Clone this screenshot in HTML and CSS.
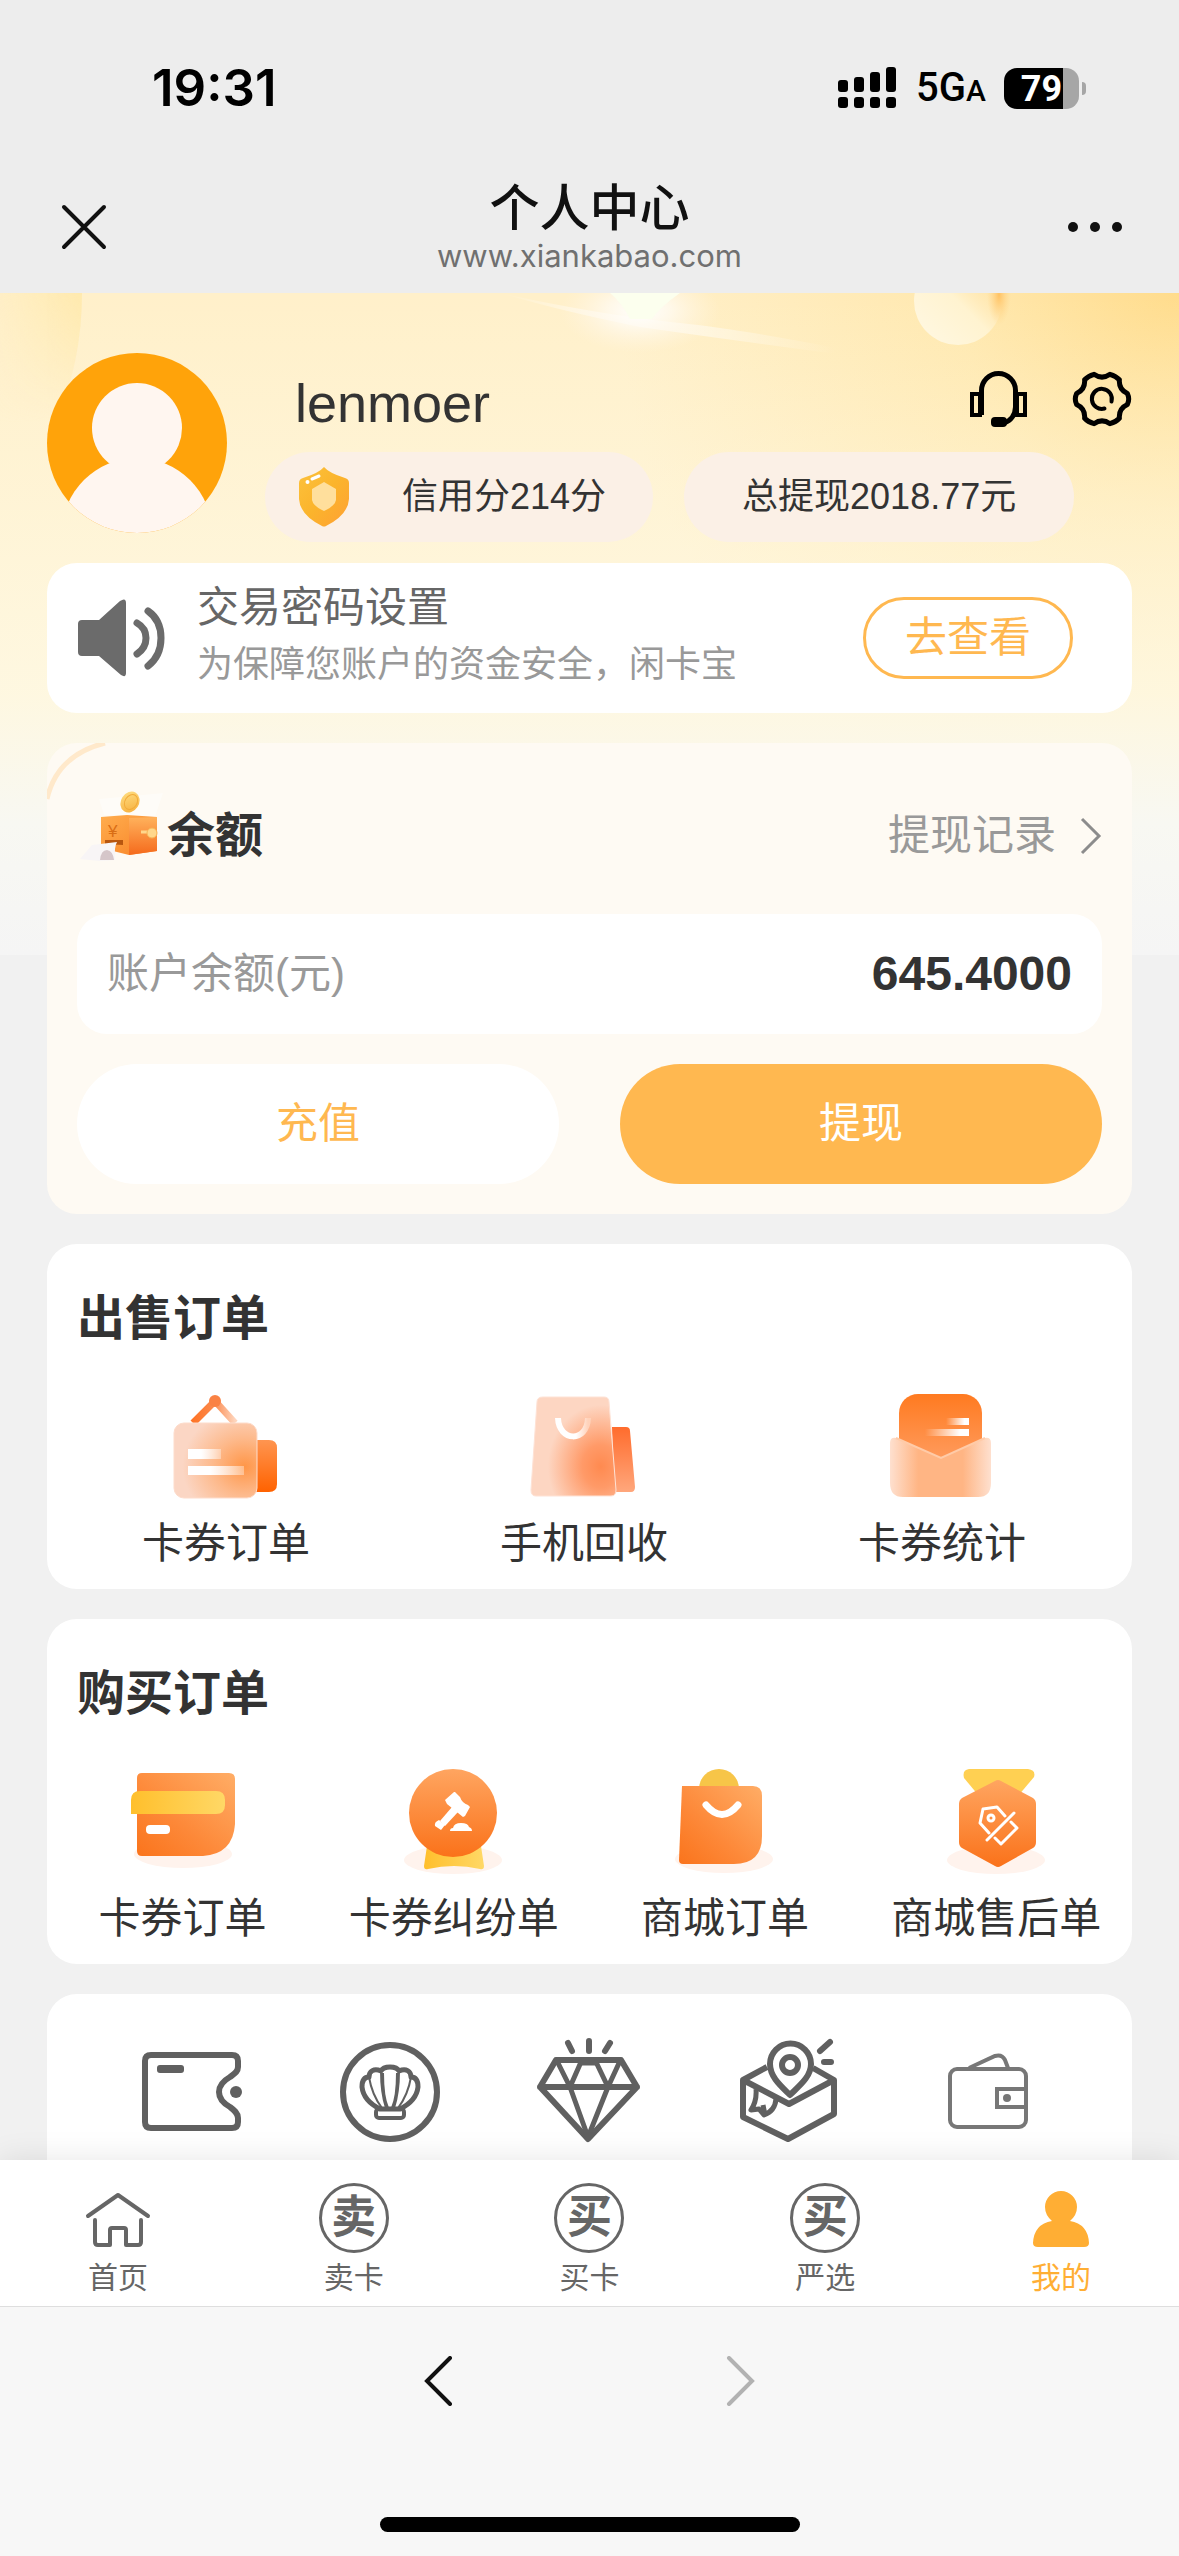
FILE: index.html
```html
<!DOCTYPE html>
<html lang="zh-CN">
<head>
<meta charset="utf-8">
<meta name="viewport" content="width=device-width, initial-scale=1">
<title>个人中心</title>
<link rel="stylesheet" href="styles.css">
</head>
<body>
<div class="app">
  <header class="chrome">
    <div class="status">
      <span class="status-time">19:31</span>
      <div class="status-right">
        <svg class="signal" viewBox="0 0 58 42" aria-hidden="true">
          <rect x="0" y="13" width="10" height="12" rx="3"/><rect x="16" y="10" width="10" height="15" rx="3"/><rect x="32" y="5" width="10" height="20" rx="3"/><rect x="48" y="0" width="10" height="25" rx="3"/>
          <rect x="0" y="30" width="10" height="11" rx="3"/><rect x="16" y="30" width="10" height="11" rx="3"/><rect x="32" y="30" width="10" height="11" rx="3"/><rect x="48" y="30" width="10" height="11" rx="3"/>
        </svg>
        <span class="network">5G<span class="network-sub">A</span></span>
        <span class="battery">79</span>
      </div>
    </div>
    <div class="navbar">
      <button class="nav-btn" type="button" aria-label="关闭">
        <svg width="54" height="54" viewBox="0 0 54 54" fill="none" stroke="#111" stroke-width="4" stroke-linecap="round"><path d="M7 7L47 47M47 7L7 47"/></svg>
      </button>
      <div class="nav-title">
        <h1>个人中心</h1>
        <p>www.xiankabao.com</p>
      </div>
      <button class="nav-btn nav-more" type="button" aria-label="更多">
        <svg width="54" height="54" viewBox="0 0 54 54" fill="#111"><circle cx="5" cy="27" r="5"/><circle cx="27" cy="27" r="5"/><circle cx="49" cy="27" r="5"/></svg>
      </button>
    </div>
  </header>

  <main class="content">
    <svg class="glow" viewBox="0 0 1179 662" preserveAspectRatio="none" aria-hidden="true">
      <defs>
        <linearGradient id="edge" x1="0" y1="0" x2="1" y2="0"><stop offset="0" stop-color="#ffe9a8" stop-opacity=".1"/><stop offset="1" stop-color="#ffe7a4" stop-opacity=".75"/></linearGradient>
        <linearGradient id="edgefade" x1="0" y1="0" x2="0" y2="1"><stop offset="0" stop-color="#fff"/><stop offset="1" stop-color="#000"/></linearGradient>
        <mask id="em"><rect x="0" y="0" width="90" height="130" fill="url(#edgefade)"/></mask>
        <radialGradient id="flare"><stop offset="0" stop-color="#fff"/><stop offset=".4" stop-color="#fffaf0" stop-opacity=".8"/><stop offset="1" stop-color="#fff4e0" stop-opacity="0"/></radialGradient>
        <linearGradient id="ball" x1="0" y1="1" x2="1" y2="0"><stop offset="0" stop-color="#fff8e4"/><stop offset=".5" stop-color="#fff3d0"/><stop offset=".85" stop-color="#ffe3a8" stop-opacity="0"/></linearGradient>
        <radialGradient id="spot"><stop offset="0" stop-color="#ffc262"/><stop offset="1" stop-color="#ffd68a" stop-opacity="0"/></radialGradient>
        <linearGradient id="ray" x1="0" y1="0" x2="1" y2="0"><stop offset="0" stop-color="#fff" stop-opacity="0"/><stop offset=".3" stop-color="#fff" stop-opacity=".7"/><stop offset=".8" stop-color="#fff" stop-opacity="0"/></linearGradient>
      </defs>
      <path d="M0 0H82Q82 70 55 130H0Z" fill="url(#edge)" mask="url(#em)"/>
      <path d="M500 0Q600 22 680 30T920 72Q780 54 640 34Q560 18 500 0Z" fill="url(#ray)"/>
      <ellipse cx="640" cy="18" rx="80" ry="42" fill="url(#flare)"/>
      <path d="M610 0H680Q660 14 652 26H630Q622 10 610 0Z" fill="#fcffee"/>
      <circle cx="958" cy="8" r="44" fill="url(#ball)"/>
      <ellipse cx="999" cy="2" rx="12" ry="30" fill="url(#spot)"/>
    </svg>

    <section class="profile">
      <svg class="avatar" viewBox="0 0 180 180" role="img" aria-label="头像">
        <clipPath id="av"><circle cx="90" cy="90" r="90"/></clipPath>
        <circle cx="90" cy="90" r="90" fill="#ffa30a"/>
        <g clip-path="url(#av)" fill="#fff6f0"><circle cx="90" cy="75" r="45"/><circle cx="90" cy="180" r="75"/></g>
      </svg>
      <div class="profile-info">
        <div class="profile-top">
          <span class="username">lenmoer</span>
          <div class="tools">
            <button class="tool" type="button" aria-label="客服">
              <svg width="60" height="60" viewBox="0 0 60 60" fill="none" stroke="#000" stroke-width="5"><path d="M12.500 46V21.500a17 17 0 0 1 34 0V38Q46 50 35 54"/><path stroke-width="4" d="M3 25h8v21H3zM48 25h8v21h-8z"/><rect x="22" y="48" width="16" height="10" rx="4" fill="#000" stroke="none"/></svg>
            </button>
            <button class="tool" type="button" aria-label="设置">
              <svg width="60" height="60" viewBox="0 0 60 60" fill="none" stroke="#000" stroke-width="5" stroke-linejoin="round"><path d="M55.400 24.600Q58 30 55.400 35.400Q46.500 39.500 47.400 49.300Q44 53 38 54.700Q30 49 22 54.700Q16 53 12.600 49.300Q13.500 39.500 4.600 35.400Q2 30 4.600 24.600Q13.500 20.500 12.600 10.700Q16 7 22 5.300Q30 11 38 5.300Q44 7 47.400 10.700Q46.500 20.500 55.400 24.600Z"/><path stroke-width="4" stroke-linecap="round" d="M39.500 32.500a10 10 0 1 0-7 7"/></svg>
            </button>
          </div>
        </div>
        <div class="pills">
          <span class="pill pill-credit">
            <svg width="50" height="60" viewBox="0 0 50 60" aria-hidden="true">
              <defs><linearGradient id="sh" x1="0" y1="0" x2="1" y2="1"><stop offset="0" stop-color="#fcc23c"/><stop offset=".5" stop-color="#fbb42c"/><stop offset="1" stop-color="#ffa033"/></linearGradient></defs>
              <path d="M25 0Q30 6 46 11Q50 12 50 16V32Q49 48 27 59Q25 60 23 59Q1 48 0 32V16Q0 12 4 11Q20 6 25 0Z" fill="url(#sh)"/>
              <path d="M25 15L37 22V33Q36 39 25 44Q14 39 13 33V22Z" fill="#ffdf9c"/>
              <path d="M13 12L20 9" stroke="#fff" stroke-width="3" stroke-linecap="round"/><circle cx="8.500" cy="15" r="2" fill="#fff"/>
            </svg>
            信用分214分
          </span>
          <span class="pill">总提现2018.77元</span>
        </div>
      </div>
    </section>

    <section class="card notice">
      <svg width="90" height="80" viewBox="0 0 90 80" aria-hidden="true">
        <path d="M5 22H22L43 3Q49 -1 49 5V75Q49 80 44 77L22 58H5Q1 58 1 54V26Q1 22 5 22Z" fill="#6b6b6b"/>
        <path d="M60 25Q69 30 69 40T60 56M71 13Q84 22 84 40T71 68" fill="none" stroke="#6b6b6b" stroke-width="7" stroke-linecap="round"/>
      </svg>
      <div class="notice-text">
        <h2>交易密码设置</h2>
        <p>为保障您账户的资金安全，闲卡宝</p>
      </div>
      <button class="btn-outline" type="button">去查看</button>
    </section>

    <section class="card balance">
      <svg class="balance-arc" width="80" height="60" viewBox="0 0 80 60" aria-hidden="true"><path d="M0 56Q10 12 58 0" fill="none" stroke="#ffe9cb" stroke-width="5"/></svg>
      <div class="balance-head">
        <svg width="90" height="90" viewBox="0 0 90 90" aria-hidden="true">
          <defs>
            <linearGradient id="bf" x1="0" y1="0" x2="1" y2="1"><stop offset="0" stop-color="#ffad4e"/><stop offset="1" stop-color="#f88327"/></linearGradient>
            <linearGradient id="bs" x1="0" y1="0" x2="0" y2="1"><stop offset="0" stop-color="#ffb25c"/><stop offset="1" stop-color="#f56a1c"/></linearGradient>
            <linearGradient id="cn" x1="0" y1="0" x2="1" y2="1"><stop offset="0" stop-color="#ffe187"/><stop offset="1" stop-color="#f6ac38"/></linearGradient>
          </defs>
          <path d="M27 24L22 8L86 2L78 26Z" fill="#fff" opacity=".4"/>
          <path d="M24 26L50 24L80 26V60L52 64L24 57Z" fill="url(#bf)"/>
          <path d="M52 27L80 26V60L52 64Z" fill="url(#bs)"/>
          <ellipse cx="53" cy="11" rx="9" ry="11" transform="rotate(32 53 11)" fill="url(#cn)"/>
          <ellipse cx="54" cy="11" rx="6" ry="8" transform="rotate(32 54 11)" fill="none" stroke="#f2ab3a" stroke-width="1"/>
          <text x="31" y="46" font-size="17" fill="#d96d15">¥</text>
          <path d="M28 49H46V54L28 53Z" fill="#b8560f"/>
          <path d="M15 54L40 51Q37 56 38 69L22 70L3 68Z" fill="#f8f5f6"/><path d="M23 69Q24 59 30 59Q36 60 37 69Z" fill="#d5c6c9"/>
          <path d="M64 41H72" stroke="#ffd78b" stroke-width="3"/><circle cx="75" cy="42" r="5" fill="#ffd78b" stroke="#f7b455"/>
        </svg>
        <h2 class="title">余额</h2>
        <a class="records" href="#records">提现记录
          <svg width="22" height="38" viewBox="0 0 22 38" fill="none" stroke="#8c8c8c" stroke-width="3" aria-hidden="true"><path d="M2 2L19 19L2 36"/></svg>
        </a>
      </div>
      <div class="amount">
        <span>账户余额(元)</span>
        <strong>645.4000</strong>
      </div>
      <div class="actions">
        <button class="btn btn-plain" type="button">充值</button>
        <button class="btn btn-fill" type="button">提现</button>
      </div>
    </section>

    <section class="card orders">
      <h2 class="title">出售订单</h2>
      <div class="grid grid-sell">
        <a href="#sell-orders">
          <svg width="120" height="120" viewBox="0 0 120 120" aria-hidden="true">
            <defs>
              <radialGradient id="s1" cx=".85" cy=".58" r=".75"><stop offset="0" stop-color="#ff9648"/><stop offset=".5" stop-color="#fdb98b"/><stop offset="1" stop-color="#fbd6c4"/></radialGradient>
              <linearGradient id="s1t" x1="0" y1="0" x2="0" y2="1"><stop offset="0" stop-color="#ff9550"/><stop offset="1" stop-color="#ff6200"/></linearGradient>
              <linearGradient id="s1h" x1="0" y1="0" x2="1" y2="0"><stop offset="0" stop-color="#ff7426"/><stop offset=".5" stop-color="#fb8a4e"/><stop offset="1" stop-color="#fed5bd"/></linearGradient>
              <linearGradient id="wl" x1="0" y1="0" x2="1" y2="0"><stop offset=".4" stop-color="#fff"/><stop offset="1" stop-color="#fff" stop-opacity=".35"/></linearGradient>
              <linearGradient id="wr" x1="0" y1="0" x2="1" y2="0"><stop offset="0" stop-color="#fff" stop-opacity="0"/><stop offset=".8" stop-color="#fff"/></linearGradient>
            </defs>
            <path d="M27 36L49 14L69 36" fill="none" stroke="url(#s1h)" stroke-width="7"/><circle cx="49" cy="14" r="6" fill="#fa8244"/>
            <path d="M88 53H103Q111 53 111 61V97Q111 105 103 105H88Z" fill="url(#s1t)"/>
            <rect x="8" y="36" width="83" height="75" rx="10" fill="url(#s1)" stroke="#fddccb"/>
            <rect x="22" y="62" width="33" height="10" fill="url(#wl)"/><rect x="22" y="79" width="56" height="9" fill="url(#wl)"/>
          </svg>
          <span>卡券订单</span>
        </a>
        <a href="#recycle">
          <svg width="120" height="120" viewBox="0 0 120 120" aria-hidden="true">
            <defs>
              <radialGradient id="s2" cx=".82" cy=".7" r=".62"><stop offset="0" stop-color="#ff8a50"/><stop offset=".35" stop-color="#ff9a68"/><stop offset="1" stop-color="#fdd6c2"/></radialGradient>
              <linearGradient id="s2t" x1="0" y1="0" x2="0" y2="1"><stop offset="0" stop-color="#ff6c2d"/><stop offset="1" stop-color="#ffa77c"/></linearGradient>
              <linearGradient id="s2u" x1="0" y1="0" x2="1" y2="0"><stop offset=".6" stop-color="#fff"/><stop offset="1" stop-color="#ffd2ba"/></linearGradient>
            </defs>
            <path d="M88 40H102Q106 40 106 44L111 100Q111 105 107 105H90Z" fill="url(#s2t)"/>
            <path d="M19 10H80Q85 10 85 15L92 103Q92 109 87 109H12Q7 109 7 103L13 15Q13 10 19 10Z" fill="url(#s2)" stroke="#fee2d5"/>
            <path d="M34 31C35 55 63 56 64 31" fill="none" stroke="url(#s2u)" stroke-width="6"/>
          </svg>
          <span>手机回收</span>
        </a>
        <a href="#stats">
          <svg width="120" height="120" viewBox="0 0 120 120" aria-hidden="true">
            <defs>
              <linearGradient id="s3" x1="0" y1="0" x2="0" y2="1"><stop offset="0" stop-color="#ff7a20"/><stop offset="1" stop-color="#ffa066"/></linearGradient>
              <linearGradient id="s3e" x1="0" y1="0" x2="1" y2="0"><stop offset="0" stop-color="#fee0cf"/><stop offset=".28" stop-color="#ffb584"/><stop offset=".72" stop-color="#ffb584"/><stop offset="1" stop-color="#fee0cf"/></linearGradient>
            </defs>
            <rect x="17" y="7" width="83" height="75" rx="19" fill="url(#s3)"/>
            <rect x="64" y="31" width="23" height="7" fill="url(#wr)"/><rect x="43" y="42" width="44" height="7" fill="url(#wr)"/>
            <path d="M14 51L59 71L103 51Q109 50 109 56V96Q109 110 96 110H21Q8 110 8 96V56Q8 50 14 51Z" fill="url(#s3e)"/>
            <path d="M14 51L59 71L103 51" fill="none" stroke="#ffcba8" stroke-width="2"/>
          </svg>
          <span>卡券统计</span>
        </a>
      </div>
    </section>

    <section class="card orders">
      <h2 class="title">购买订单</h2>
      <div class="grid grid-buy">
        <a href="#buy-orders">
          <svg width="120" height="120" viewBox="0 0 120 120" aria-hidden="true">
            <defs>
              <linearGradient id="o" x1="0" y1="1" x2="1" y2="0"><stop offset="0" stop-color="#fa741c"/><stop offset=".4" stop-color="#fd8838"/><stop offset="1" stop-color="#ffad66"/></linearGradient>
              <linearGradient id="ov" x1="0" y1="0" x2="0" y2="1"><stop offset="0" stop-color="#ffa560"/><stop offset="1" stop-color="#fa721a"/></linearGradient>
              <linearGradient id="y" x1="0" y1="0" x2="1" y2="0"><stop offset="0" stop-color="#ffbf2c"/><stop offset="1" stop-color="#ffd866"/></linearGradient>
            </defs>
            <ellipse cx="60" cy="92" rx="49" ry="14" fill="#fff3ed"/>
            <path d="M19 11H106Q112 11 112 17V62Q110 92 80 94H19Q14 94 14 89V16Q14 11 19 11Z" fill="url(#o)"/>
            <path d="M17 29H93Q102 29 102 38V43Q102 52 93 52H8V38Q8 29 17 29Z" fill="url(#y)"/>
            <rect x="23" y="63" width="24" height="9" rx="4" fill="#fff"/>
          </svg>
          <span>卡券订单</span>
        </a>
        <a href="#disputes">
          <svg width="120" height="120" viewBox="0 0 120 120" aria-hidden="true">
            <ellipse cx="59" cy="98" rx="49" ry="14" fill="#fff3ed"/>
            <path d="M33 84H87L90 104Q90 108 86 107Q60 101 34 107Q30 108 30 104Z" fill="url(#y)"/>
            <circle cx="59" cy="51" r="44" fill="url(#ov)"/>
            <g fill="#fff"><path d="M60 30L51 38L53 42L69 55L71 54L76 45L74 43Q68 41 66 35L61 30Z"/><path d="M58 45L64 50L51 64L46 59Z"/><path d="M45 58L51 63L47 68L41 64Q40 60 45 58Z"/><path d="M59 66Q60 61 67 61T75 65Q78 66 78 69H56Q56 66 59 66Z"/></g>
          </svg>
          <span>卡券纠纷单</span>
        </a>
        <a href="#mall-orders">
          <svg width="120" height="120" viewBox="0 0 120 120" aria-hidden="true">
            <ellipse cx="59" cy="97" rx="49" ry="14" fill="#fff3ed"/>
            <circle cx="54" cy="27" r="20" fill="#f7c548"/>
            <path d="M17 24H88Q97 24 97 34V74Q97 102 69 102H18Q14 102 14 98Z" fill="url(#o)"/>
            <path d="M41 43Q57 62 73 43" fill="none" stroke="#fff" stroke-width="7" stroke-linecap="round"/>
          </svg>
          <span>商城订单</span>
        </a>
        <a href="#after-sale">
          <svg width="120" height="120" viewBox="0 0 120 120" aria-hidden="true">
            <ellipse cx="60" cy="98" rx="49" ry="14" fill="#fff3ed"/>
            <path d="M33 7H92Q100 8 98 15L82 34H43L28 16Q26 8 33 7Z" fill="#ffd052"/>
            <path d="M59 19Q62 17 65 19L97 36Q100 38 100 42V80Q100 84 97 86L65 104Q62 106 59 104L26 86Q23 84 23 80V42Q23 38 26 36Z" fill="url(#ov)"/>
            <g fill="none" stroke="#fff" stroke-width="3" stroke-linecap="round" stroke-linejoin="round"><path d="M53 71L44 61L47 47L61 45L69 54M78 51L51 78M75 60L81 66L65 82L59 76"/><circle cx="55" cy="56" r="3"/></g>
          </svg>
          <span>商城售后单</span>
        </a>
      </div>
    </section>

    <section class="card services">
      <a href="#cards" aria-label="卡包">
        <svg width="120" height="120" viewBox="0 0 120 120" fill="none" stroke="#606060" stroke-width="6"><path d="M20 24H101Q107 24 107 30V36C107 41 103 43 99 46C92 50 88 55 88 61S92 72 99 76C103 79 107 82 107 87V91Q107 97 101 97H20Q14 97 14 91V30Q14 24 20 24Z"/><rect x="26" y="34" width="27" height="8" rx="3" fill="#606060" stroke="none"/><circle cx="105" cy="61" r="6" fill="#606060" stroke="none"/></svg>
      </a>
      <a href="#shell" aria-label="贝壳">
        <svg width="120" height="120" viewBox="0 0 120 120" fill="none" stroke="#606060" stroke-width="6"><circle cx="60" cy="61" r="47"/><path stroke-width="5" stroke-linejoin="round" d="M50 78C40 73 33 65 32 56C32 50 34 46 39 46C39 40 44 37 51 40C53 36 57 36 60 36S67 36 69 40C76 37 81 40 81 46C86 46 88 50 88 56C87 65 80 73 70 78Z"/><path stroke-width="2" d="M39 46Q42 64 52 77M51 40Q51 62 56 77M69 40Q69 62 64 77M81 46Q78 64 68 77M53 42Q53 66 58 77M67 42Q67 66 62 77"/><rect stroke-width="4" x="46" y="78" width="28" height="9" rx="3"/></svg>
      </a>
      <a href="#vip" aria-label="会员">
        <svg width="120" height="120" viewBox="0 0 120 120" fill="none" stroke="#606060" stroke-width="6" stroke-linejoin="round" stroke-linecap="round"><path d="M27 29H92L108 56L59 108L11 56ZM11 56H108"/><path stroke-width="5" d="M28 30L41 56L59 106L79 56L91 30M52 31L41 56M67 31L79 56"/><path stroke-width="5" stroke-linecap="butt" d="M50 32H69"/><path d="M39 12L43 20M60 10V20M81 12L76 20"/></svg>
      </a>
      <a href="#address" aria-label="收货地址">
        <svg width="120" height="120" viewBox="0 0 120 120" fill="none" stroke="#606060" stroke-width="6" stroke-linejoin="round"><path d="M38 36L14 49V86L59 108L105 83V49L84 37M14 49L60 73L105 49"/><path d="M61 64C52 55 41 46 41 33A20 20 0 0 1 82 33C82 46 70 55 61 64Z" fill="#fff"/><circle cx="61" cy="34" r="8"/><path stroke-width="5" d="M27 58Q28 70 22 79L30 78L35 84Q46 80 47 68M34 74L36 84"/><path stroke-linecap="round" d="M91 20L101 11M95 31H102"/></svg>
      </a>
      <a href="#wallet" aria-label="钱包">
        <svg width="120" height="120" viewBox="0 0 120 120" fill="none" stroke="#777" stroke-width="4"><rect x="22" y="38" width="76" height="58" rx="7"/><path d="M41 37L67 25Q74 23 77 29L80 37M98 58H69V76H98"/><circle cx="79" cy="67" r="4" fill="#777" stroke="none"/></svg>
      </a>
    </section>
  </main>

  <nav class="tabbar">
    <a href="#home">
      <svg width="80" height="80" viewBox="0 0 80 80" fill="none" stroke="#666" stroke-width="4" stroke-linejoin="round" stroke-linecap="round"><path d="M10 38L40 17L70 38M17 42V64Q17 67 20 67H32V52Q32 50 34 50H46Q48 50 48 52V67H60Q63 67 63 64V42"/></svg>
      <span>首页</span>
    </a>
    <a href="#sell"><span class="coin"><b>卖</b></span><span>卖卡</span></a>
    <a href="#buy"><span class="coin"><b>买</b></span><span>买卡</span></a>
    <a href="#select"><span class="coin"><b>买</b></span><span>严选</span></a>
    <a class="active" href="#me">
      <svg width="80" height="80" viewBox="0 0 80 80" fill="#ffae34"><path d="M31 43Q24 37 24 29A16 16 0 0 1 56 29Q56 37 49 43Q67 46 68 65Q68 69 63 69H17Q12 69 12 65Q13 46 31 43Z"/></svg>
      <span>我的</span>
    </a>
  </nav>

  <footer class="browser-bar">
    <div class="history">
      <button type="button" aria-label="后退"><svg width="30" height="50" viewBox="0 0 30 50" fill="none" stroke="#111" stroke-width="4" stroke-linecap="round"><path d="M27 2L4 25L27 48"/></svg></button>
      <button type="button" aria-label="前进" disabled><svg width="30" height="50" viewBox="0 0 30 50" fill="none" stroke="#b2b2b2" stroke-width="4" stroke-linecap="round"><path d="M3 2L26 25L3 48"/></svg></button>
    </div>
    <div class="home-indicator"></div>
  </footer>
</div>
</body>
</html>
```
FILE: styles.css
```css
* { box-sizing: border-box; }

body {
  margin: 0;
  color: #333;
  background: #f1f1f1;
  font-family: "Liberation Sans", "Noto Sans CJK SC", sans-serif;
  font-size: 42px;
  line-height: 1.4;
}

h1, h2, p { margin: 0; font-weight: 400; }
a { color: inherit; text-decoration: none; }
svg { display: block; flex: none; }
button { font: inherit; padding: 0; border: 0; background: none; cursor: pointer; }

.app { display: flex; flex-direction: column; height: 100vh; }

/* Status bar and title bar */
.chrome { flex: none; background: #ededed; }

.status {
  display: flex;
  justify-content: space-between;
  align-items: center;
  height: 120px;
  padding: 56px 100px 0 152px;
  color: #000;
}
.status-time { font-family: Inter, sans-serif; font-size: 51px; font-weight: 600; line-height: 64px; }
.status-right { display: flex; align-items: center; font-family: Roboto, sans-serif; }
.signal { width: 58px; height: 42px; }
.network { margin: 0 18px 0 20px; font-size: 40px; font-weight: 500; line-height: 60px; }
.network-sub { font-size: 30px; line-height: 30px; }
.battery {
  position: relative;
  width: 75px;
  height: 41px;
  border-radius: 13px;
  background: linear-gradient(90deg, #000 59px, #a6a6a6 59px);
  color: #fff;
  font-size: 36px;
  font-weight: 700;
  line-height: 42px;
  text-align: center;
}
.battery::after {
  content: "";
  position: absolute;
  left: 78px;
  top: 14px;
  width: 4px;
  height: 13px;
  border-radius: 0 4px 4px 0;
  background: #a6a6a6;
}

.navbar {
  display: grid;
  grid-template-columns: 1fr auto 1fr;
  align-items: center;
  padding: 60px 57px 19px;
}
.nav-btn { justify-self: start; }
.nav-more { justify-self: end; }
.nav-title { text-align: center; }
.nav-title h1 { font-size: 50px; font-weight: 500; line-height: 58px; color: #111; }
.nav-title p { font-family: Inter, sans-serif; font-size: 31px; line-height: 36px; color: #707070; }

/* Scrolling content */
.content {
  position: relative;
  flex: 1;
  min-height: 0;
  overflow: hidden auto;
  scrollbar-width: none;
  padding: 0 47px;
  background:
    linear-gradient(180deg, rgba(245, 245, 245, 0) 0, rgba(254, 250, 232, .75) 400px, #f8f8f2 530px, #f5f5f5 662px) top / 100% 662px no-repeat,
    radial-gradient(circle at 100% 0, #ffdc8c 0, rgba(255, 228, 160, .65) 220px, rgba(255, 240, 205, 0) 560px) top / 100% 662px no-repeat,
    linear-gradient(#fff0ca, #fff0ca) top / 100% 662px no-repeat,
    #f1f1f1;
}
.glow { position: absolute; left: 0; top: 0; width: 100%; height: 662px; }

.profile { position: relative; display: flex; padding-top: 60px; }
.avatar { width: 180px; height: 180px; }
.profile-info { flex: 1; margin-left: 38px; padding-top: 16px; }
.profile-top { display: flex; justify-content: space-between; }
.username { padding-left: 30px; font-size: 54px; line-height: 68px; }
.tools { display: flex; gap: 43px; height: 60px; }
.pills { display: flex; gap: 31px; margin-top: 15px; }
.pill {
  display: flex;
  align-items: center;
  height: 90px;
  padding: 0 58px;
  border-radius: 45px;
  background: #fbf0e6;
  font-size: 36px;
}
.pill-credit { gap: 53px; padding: 0 47px 0 34px; }

.card { position: relative; margin-top: 30px; border-radius: 30px; background: #fff; }

.notice {
  display: flex;
  align-items: center;
  gap: 30px;
  height: 150px;
  margin-top: 21px;
  padding: 0 59px 0 30px;
}
.notice-text { flex: 1; padding-bottom: 6px; color: #666; }
.notice-text h2 { font-size: 42px; line-height: 60px; }
.notice-text p { font-size: 36px; line-height: 54px; color: #999; }
.btn-outline {
  width: 210px;
  height: 82px;
  border: 3px solid #ffb850;
  border-radius: 41px;
  color: #ffb850;
}

.title { font-size: 48px; font-weight: 700; line-height: 60px; }

.balance { padding: 48px 30px 30px; background: #fefaf3; overflow: hidden; }
.balance-arc { position: absolute; left: 0; top: 0; }
.balance-head { display: flex; align-items: center; margin-bottom: 33px; }
.records { display: flex; align-items: center; gap: 24px; margin-left: auto; color: #999; }
.amount {
  display: flex;
  align-items: center;
  justify-content: space-between;
  height: 120px;
  padding: 0 30px;
  border-radius: 30px;
  background: #fff;
  color: #999;
}
.amount strong { font-size: 48px; color: #333; }
.actions { display: flex; gap: 61px; margin-top: 30px; }
.btn { flex: 1; height: 120px; border-radius: 60px; }
.btn-plain { background: #fff; color: #ffb850; }
.btn-fill { background: #ffb850; color: #fff; }

/* Order shortcuts */
.orders { padding: 45px 0 15px; }
.orders .title { padding-left: 30px; }
.grid { display: grid; margin-top: 38px; }
.grid-sell { grid-template-columns: repeat(3, 33%); }
.grid-buy { grid-template-columns: repeat(4, 1fr); }
.grid a { display: flex; flex-direction: column; align-items: center; gap: 7px; line-height: 60px; white-space: nowrap; }

.services { display: grid; grid-template-columns: repeat(5, 1fr); justify-items: center; padding: 37px 44px 60px; }

/* Bottom tabs */
.tabbar {
  position: relative;
  flex: none;
  display: grid;
  grid-template-columns: repeat(5, 1fr);
  padding: 18px 0 8px;
  border-bottom: 1px solid #dedede;
  background: #fff;
  box-shadow: 0 0 30px rgba(0, 0, 0, .1);
  color: #666;
  font-size: 30px;
  line-height: 40px;
}
.tabbar a { display: flex; flex-direction: column; align-items: center; }
.tabbar .active { color: #ffae34; }
.coin {
  display: flex;
  align-items: center;
  justify-content: center;
  width: 70px;
  height: 70px;
  margin: 5px 0;
  border: 3px solid #666;
  border-radius: 50%;
  font-size: 45px;
}

.browser-bar {
  position: relative;
  flex: none;
  display: flex;
  flex-direction: column;
  align-items: center;
  gap: 111px;
  padding: 49px 0 24px;
  background: #f7f7f7;
}
.history { display: flex; gap: 273px; }
.home-indicator { width: 420px; height: 15px; border-radius: 8px; background: #000; }
```
